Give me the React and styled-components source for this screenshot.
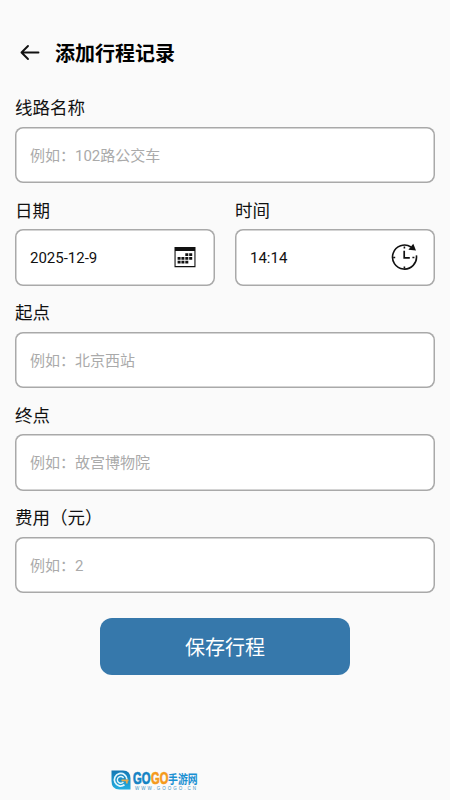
import styled, { createGlobalStyle } from 'styled-components';

const GlobalStyle = createGlobalStyle`
	* {
		box-sizing: border-box;
	}
	body {
		margin: 0;
		background: #fafafa;
		font-family: Roboto, "Noto Sans CJK SC", sans-serif;
		color: #111;
	}
`
const Page = styled.div`
	width: 100%;
	height: 800px;
	padding: 34px 15px 0;
	display: flex;
	flex-direction: column;
	overflow: hidden;
`
const Header = styled.header`
	height: 40px;
	padding-left: 5px;
	display: flex;
	align-items: center;
	gap: 15px;
`
const BackButton = styled.button`
	width: 20px;
	height: 20px;
	padding: 0;
	border: none;
	background: none;
	display: flex;
`
const Title = styled.h1`
	margin: 0;
	font-size: 20px;
	line-height: 40px;
	font-weight: 700;
	color: #000;
`
const Form = styled.form`
	margin-top: 21px;
	display: flex;
	flex-direction: column;
	gap: 14.5px;
`
const FieldRow = styled.div`
	display: grid;
	grid-template-columns: 1fr 1fr;
	gap: 20px;
`
const FieldWrapper = styled.div`
	display: flex;
	flex-direction: column;
	gap: 5.5px;
`
const Label = styled.label`
	height: 26px;
	font-size: 17.5px;
	line-height: 26px;
`
const InputBox = styled.div`
	height: 56.5px;
	padding: 0 15px;
	border-radius: 8px;
	background: #fff;
	box-shadow: inset 0 0 0 1.5px #a9a9a9;
	display: flex;
	align-items: center;
	justify-content: space-between;
`
const Value = styled.span`
	padding-top: 2px;
	font-size: 15px;
	line-height: 22px;
	color: ${({ $placeholder }) => ($placeholder ? '#aaa' : '#111')};
`
const SaveButton = styled.button`
	width: 250px;
	height: 57px;
	margin: 10px auto 0;
	padding: 3px 0 0;
	border: none;
	border-radius: 12px;
	background: #3678ab;
	color: #fff;
	font-family: inherit;
	font-size: 20px;
	line-height: 30px;
`
const Brand = styled.footer`
	margin: auto 0 9px 96px;
	height: 22px;
	display: flex;
	align-items: center;
	gap: 2px;
`
const BrandText = styled.div`
	display: flex;
	flex-direction: column;
	gap: 0.5px;
	padding-top: 1.5px;
`
const BrandName = styled.div`
	height: 15px;
	display: flex;
	align-items: center;
`
const Latin = styled.span`
	width: 17.5px;
	font-family: "Liberation Sans", sans-serif;
	font-size: 16px;
	font-weight: 700;
	line-height: 15px;
	color: ${({ $color }) => $color};

	span {
		display: inline-block;
		transform: scaleX(0.7);
		transform-origin: left;
		-webkit-text-stroke: 0.7px currentColor;
	}
`
const Chinese = styled.span`
	width: 30px;
	font-family: "Noto Sans CJK SC", sans-serif;
	font-size: 12.5px;
	font-weight: 700;
	line-height: 15px;
	white-space: nowrap;
	color: #1a90d2;

	span {
		display: inline-block;
		transform: scaleX(0.79);
		transform-origin: left;
	}
`
const BrandUrl = styled.div`
	height: 5px;
	padding-left: 2px;
	font-family: "Liberation Sans", sans-serif;
	font-size: 4.5px;
	line-height: 5px;
	letter-spacing: 2px;
	color: #3d94c4;
	white-space: nowrap;
`

const ArrowIcon = () => (
	<svg width="20" height="20" viewBox="0 0 20 20" fill="none" stroke="#111" strokeWidth="1.9" strokeLinecap="round" strokeLinejoin="round">
		<path d="M18.5 8.5H1.5M8 2L1.5 8.5 8 15" />
	</svg>
)

const CalendarIcon = () => (
	<svg width="30" height="30" viewBox="0 0 30 30" fill="#111">
		<path d="M4.5 5h21v20.2h-21zM5.6 9v15.1h18.8V9z" fillRule="evenodd" />
		<path d="M15.3 11.2h3V14h-3zM19.2 11.2h3V14h-3zM7.6 15h3v2.8h-3zM11.4 15h3v2.8h-3zM15.3 15h3v2.8h-3zM19.2 15h3v2.8h-3zM7.6 18.8h3v2.8h-3zM11.4 18.8h3v2.8h-3zM15.3 18.8h3v2.8h-3z" />
	</svg>
)

const ClockIcon = () => (
	<svg width="30" height="30" viewBox="0 0 30 30" fill="none" stroke="#111" strokeWidth="1.6">
		<path d="M21 5A12 12 0 1 0 26.4 13.4" />
		<path d="M14.2 8.7v7.2h5.6" strokeWidth="1.7" />
		<path d="M14.4 4.4v2M14.4 24.6v2M3.2 15.5h2M22.4 15.5h2" />
		<path d="M23.3 1.8L26 8.4l-7.6-.7z" fill="#111" stroke="none" />
	</svg>
)

const BrandIcon = () => (
	<svg width="20" height="20" viewBox="0 0 20 20" fill="none">
		<defs>
			<linearGradient id="leaf" x1="0" y1="0" x2="0" y2="1">
				<stop offset="0" stopColor="#1478b4" />
				<stop offset="1" stopColor="#23aee0" />
			</linearGradient>
		</defs>
		<path d="M.5.5H12Q19.5.5 19.5 8.5V19.5H8.5Q.5 19.5.5 11z" fill="url(#leaf)" />
		<path d="M16 9.5A6.3 6.3 0 1 0 13.5 14.8" stroke="#e2f6fd" strokeWidth="1.7" />
		<path d="M12.6 8A3.4 3.4 0 1 0 12.4 12" stroke="#e2f6fd" strokeWidth="1.4" />
		<path d="M10.5 10.4h7M15.8 10.4v3" stroke="#e8a84a" strokeWidth="1.8" />
	</svg>
)

const Field = ({ label, value, placeholder, icon }) => (
	<FieldWrapper>
		<Label>{label}</Label>
		<InputBox>
			<Value $placeholder={!value}>{value || placeholder}</Value>
			{icon}
		</InputBox>
	</FieldWrapper>
)

const App = () => {
	return (
		<>
			<GlobalStyle />
			<Page>
				<Header>
					<BackButton type="button">
						<ArrowIcon />
					</BackButton>
					<Title>添加行程记录</Title>
				</Header>
				<Form>
					<Field label="线路名称" placeholder="例如：102路公交车" />
					<FieldRow>
						<Field label="日期" value="2025-12-9" icon={<CalendarIcon />} />
						<Field label="时间" value="14:14" icon={<ClockIcon />} />
					</FieldRow>
					<Field label="起点" placeholder="例如：北京西站" />
					<Field label="终点" placeholder="例如：故宫博物院" />
					<Field label="费用（元）" placeholder="例如：2" />
					<SaveButton type="button">保存行程</SaveButton>
				</Form>
				<Brand>
					<BrandIcon />
					<BrandText>
						<BrandName>
							<Latin $color="#1583c4"><span>GO</span></Latin>
							<Latin $color="#f59a1b"><span>GO</span></Latin>
							<Chinese><span>手游网</span></Chinese>
						</BrandName>
						<BrandUrl>WWW.GOOGO.CN</BrandUrl>
					</BrandText>
				</Brand>
			</Page>
		</>
	);
}

export default App;
